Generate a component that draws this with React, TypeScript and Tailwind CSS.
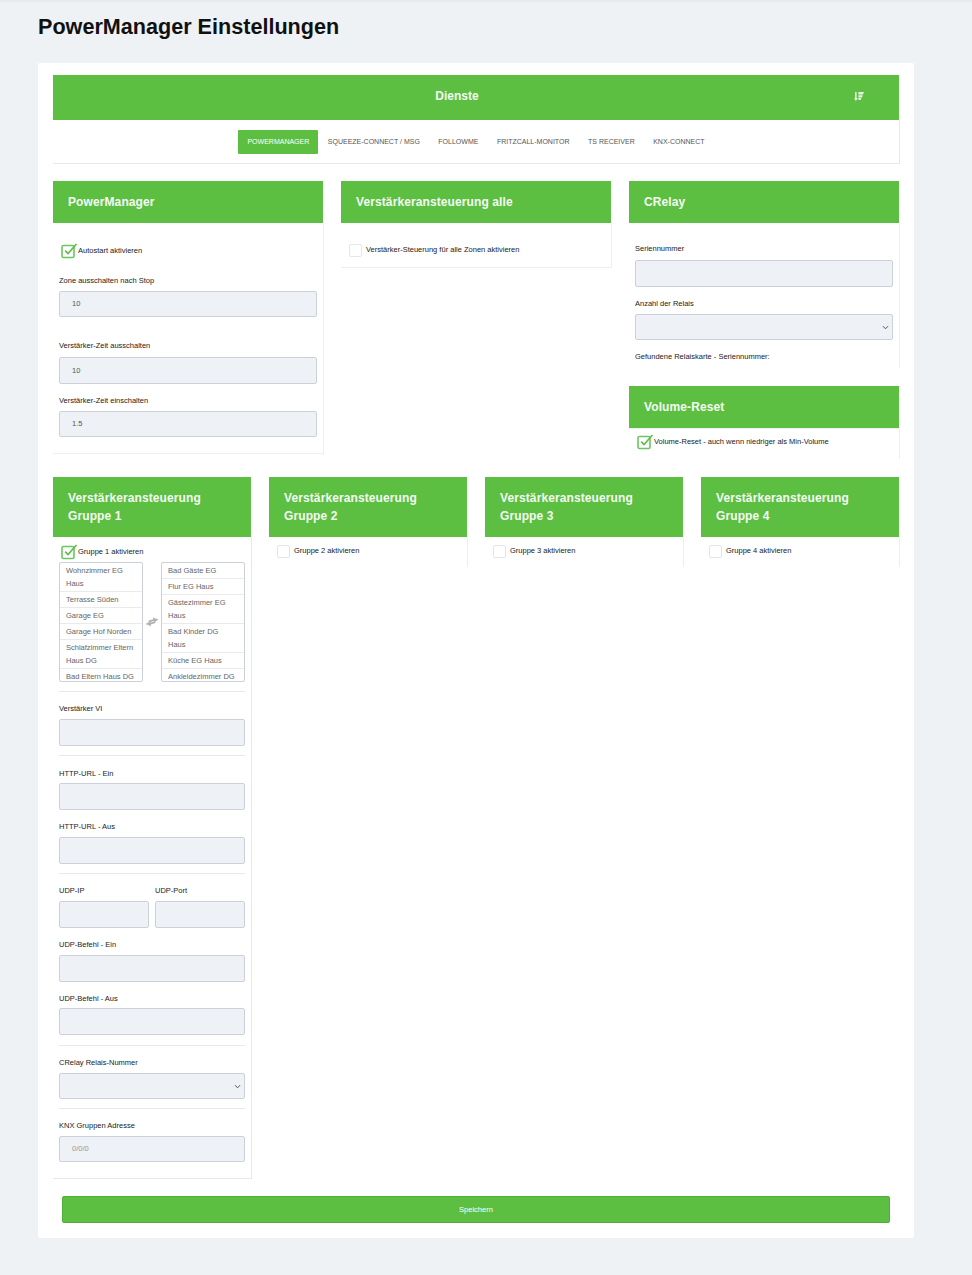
const Check = () => (
  <svg width="17" height="16" viewBox="0 0 17 16" fill="none" className="shrink-0">
    <rect x="1" y="2.5" width="12" height="12" rx="1.5" stroke="#6cc564" strokeWidth="1.6" />
    <path d="M4.2 7.6 L7 10.6 L15.5 1" stroke="#5bbf42" strokeWidth="1.6" />
  </svg>
)

const Checkbox = ({ on, text }: { on?: boolean; text: string }) => (
  <div className="flex items-center text-[7.5px] leading-[14px] text-[#222]">
    {on ? (
      <span className="ml-[2px]">
        <Check />
      </span>
    ) : (
      <span className="ml-[2px] mr-[4px] h-[13px] w-[13px] rounded-[2px] border border-[#e3e6ea] bg-white" />
    )}
    {text}
  </div>
)

const Label = ({ children, className = '' }: { children: string; className?: string }) => (
  <div className={`text-[7.5px] leading-[11px] text-[#222] ${className}`}>{children}</div>
)

const Input = ({ value, className = '', short }: { value?: string; className?: string; short?: boolean }) => (
  <div
    className={`flex items-center rounded-[2px] border border-[#ccd1d9] bg-[#eef1f5] pl-[12px] text-[7.5px] text-[#555] ${short ? 'h-[26px]' : 'h-[27px]'} ${className}`}
  >
    {value}
  </div>
)

const Select = () => (
  <div className="flex h-[26px] items-center justify-end rounded-[2px] border border-[#ccd1d9] bg-[#eef1f5] pr-[3px]">
    <svg width="7" height="7" viewBox="0 0 7 7" fill="none">
      <path d="M1 2.2 L3.5 4.8 L6 2.2" stroke="#555" strokeWidth="1" />
    </svg>
  </div>
)

const Head = ({ children, className = 'h-[42px]' }: { children: React.ReactNode; className?: string }) => (
  <div className={`flex items-center bg-[#5cbf42] pl-[15px] text-[12px] font-bold leading-[18px] tracking-[0.1px] text-[#f4fbf2] ${className}`}>
    <div>{children}</div>
  </div>
)

const Hr = ({ className = '' }: { className?: string }) => <div className={`h-px bg-[#e6e8eb] ${className}`} />

const zonesLeft = ['Wohnzimmer EG Haus', 'Terrasse Süden', 'Garage EG', 'Garage Hof Norden', 'Schlafzimmer Eltern Haus DG', 'Bad Eltern Haus DG']
const zonesRight = ['Bad Gäste EG', 'Flur EG Haus', 'Gästezimmer EG Haus', 'Bad Kinder DG Haus', 'Küche EG Haus', 'Ankleidezimmer DG']

const ZoneList = ({ items }: { items: string[] }) => (
  <div className="h-[120px] w-[84px] overflow-hidden rounded-[2px] border border-[#ccd1d9] bg-white">
    {items.map((z) => (
      <div key={z} className="border-b border-[#e8eaed] px-[6px] py-[1px] text-[7.5px] leading-[13px] text-[#666]">
        {z}
      </div>
    ))}
  </div>
)

const navItems = ['SQUEEZE-CONNECT / MSG', 'FOLLOWME', 'FRITZCALL-MONITOR', 'TS RECEIVER', 'KNX-CONNECT']

export default function App() {
  return (
    <div className="min-h-[1275px] bg-[#eef2f5] pb-[37px] font-['Liberation_Sans',Arial,sans-serif] antialiased">
      <div className="h-[2px] bg-[#e8ebee]" />
      <h1 className="ml-[38px] mt-[12px] h-[49px] text-[21.6px] font-bold leading-[26px] text-[#111]">PowerManager Einstellungen</h1>
      <div className="ml-[38px] w-[876px] rounded-[2px] bg-white px-[15px] pb-[15px] pt-[12px]">
        <div className="flex h-[45px] items-center bg-[#5cbf42]">
          <div className="w-[808px] pb-[4px] text-center text-[12px] font-bold text-[#f4fbf2]">Dienste</div>
          <svg width="10" height="9" viewBox="0 0 10 9" className="-ml-[7px] mb-[3px]" fill="#e6f5e2">
            <path d="M1 0h1.6v6H4L1.8 9 0 6h1zM4.4 0H10L9 2.5H4.4zM4.4 3.2H8.7L8 5.4H4.4zM4.4 6h3L6.6 8H4.4z" />
          </svg>
        </div>
        <div className="-mr-px flex h-[44px] items-center justify-center gap-[0.5px] border-b border-r border-[#e6e8eb] pt-[1px]">
          <div className="flex h-[24px] items-center rounded-[1px] bg-[#5cbf42] px-[9px] text-[7px] text-white">POWERMANAGER</div>
          {navItems.map((n) => (
            <div key={n} className="px-[9px] pt-[1px] text-[7px] text-[#555]">
              {n}
            </div>
          ))}
        </div>

        <div className="mt-[17px] flex gap-[18px]">
          <div className="w-[270px]">
            <Head>PowerManager</Head>
            <div className="-mr-px h-[231px] border-b border-r border-[#eceef0] px-[6px] pt-[20px]">
              <Checkbox on text="Autostart aktivieren" />
              <Label className="mt-[16px]">Zone ausschalten nach Stop</Label>
              <Input short value="10" className="mt-[5px]" />
              <Label className="mt-[23px]">Verstärker-Zeit ausschalten</Label>
              <Input value="10" className="mt-[6px]" />
              <Label className="mt-[11px]">Verstärker-Zeit einschalten</Label>
              <Input short value="1.5" className="mt-[5px]" />
            </div>
          </div>
          <div className="w-[270px]">
            <Head>Verstärkeransteuerung alle</Head>
            <div className="-mr-px h-[45px] border-b border-r border-[#eceef0] px-[6px] pt-[20px]">
              <Checkbox text="Verstärker-Steuerung für alle Zonen aktivieren" />
            </div>
          </div>
          <div className="w-[270px]">
            <Head>CRelay</Head>
            <div className="-mr-px h-[145px] border-r border-[#eceef0] px-[6px] pt-[20px]">
              <Label>Seriennummer</Label>
              <Input className="mt-[6px]" />
              <Label className="mt-[11px]">Anzahl der Relais</Label>
              <div className="mt-[5px]">
                <Select />
              </div>
              <Label className="mt-[11px]">Gefundene Relaiskarte - Seriennummer:</Label>
            </div>
            <Head className="mt-[18px] h-[42px]">Volume-Reset</Head>
            <div className="-mr-px h-[31px] border-r border-t border-[#eceef0] px-[6px] pt-[5px]">
              <Checkbox on text="Volume-Reset - auch wenn niedriger als Min-Volume" />
            </div>
          </div>
        </div>

        <div className="mt-[18px] flex items-start gap-[18px]">
          <div className="w-[198px]">
            <Head className="h-[60px]">
              Verstärkeransteuerung
              <br />
              Gruppe 1
            </Head>
            <div className="-mr-px h-[642px] border-b border-r border-[#e6e8eb] px-[6px] pt-[7px]">
              <Checkbox on text="Gruppe 1 aktivieren" />
              <div className="mt-[2px] flex items-center justify-between">
                <ZoneList items={zonesLeft} />
                <svg width="14" height="10" viewBox="0 0 14 10" fill="#b0b3b6">
                  <path d="M8 0.5 L13.5 2.6 L9 5.4 L8.8 4 L4 5.4 L3.5 3.6 L8.3 2.2 Z" />
                  <path d="M0.5 7 L5 4.4 L5.2 5.6 L10 4.4 L10.5 6 L5.7 7.4 L6 9.2 Z" />
                </svg>
                <ZoneList items={zonesRight} />
              </div>
              <Hr className="mt-[9px]" />
              <Label className="mt-[11px]">Verstärker VI</Label>
              <Input className="mt-[5px]" />
              <Hr className="mt-[9px]" />
              <Label className="mt-[12px]">HTTP-URL - Ein</Label>
              <Input className="mt-[4px]" />
              <Label className="mt-[11px]">HTTP-URL - Aus</Label>
              <Input className="mt-[5px]" />
              <Hr className="mt-[9px]" />
              <div className="mt-[11px] flex gap-[6px]">
                <div className="flex-1">
                  <Label>UDP-IP</Label>
                  <Input className="mt-[5px]" />
                </div>
                <div className="flex-1">
                  <Label>UDP-Port</Label>
                  <Input className="mt-[5px]" />
                </div>
              </div>
              <Label className="mt-[11px]">UDP-Befehl - Ein</Label>
              <Input className="mt-[5px]" />
              <Label className="mt-[11px]">UDP-Befehl - Aus</Label>
              <Input className="mt-[4px]" />
              <Hr className="mt-[10px]" />
              <Label className="mt-[11px]">CRelay Relais-Nummer</Label>
              <div className="mt-[5px]">
                <Select />
              </div>
              <Hr className="mt-[9px]" />
              <Label className="mt-[11px]">KNX Gruppen Adresse</Label>
              <Input short value="0/0/0" className="mt-[5px] !text-[#999]" />
            </div>
          </div>
          {[2, 3, 4].map((g) => (
            <div key={g} className="w-[198px]">
              <Head className="h-[60px]">
                Verstärkeransteuerung
                <br />
                Gruppe {g}
              </Head>
              <div className="-mr-px h-[30px] border-r border-[#eceef0] px-[6px] pt-[7px]">
                <Checkbox text={`Gruppe ${g} aktivieren`} />
              </div>
            </div>
          ))}
        </div>

        <div className="mx-[9px] mt-[17px] flex h-[27px] items-center justify-center rounded-[2px] border border-[#4fae38] bg-[#5cbf42] text-[7.5px] text-white">
          Speichern
        </div>
      </div>
    </div>
  )
}
